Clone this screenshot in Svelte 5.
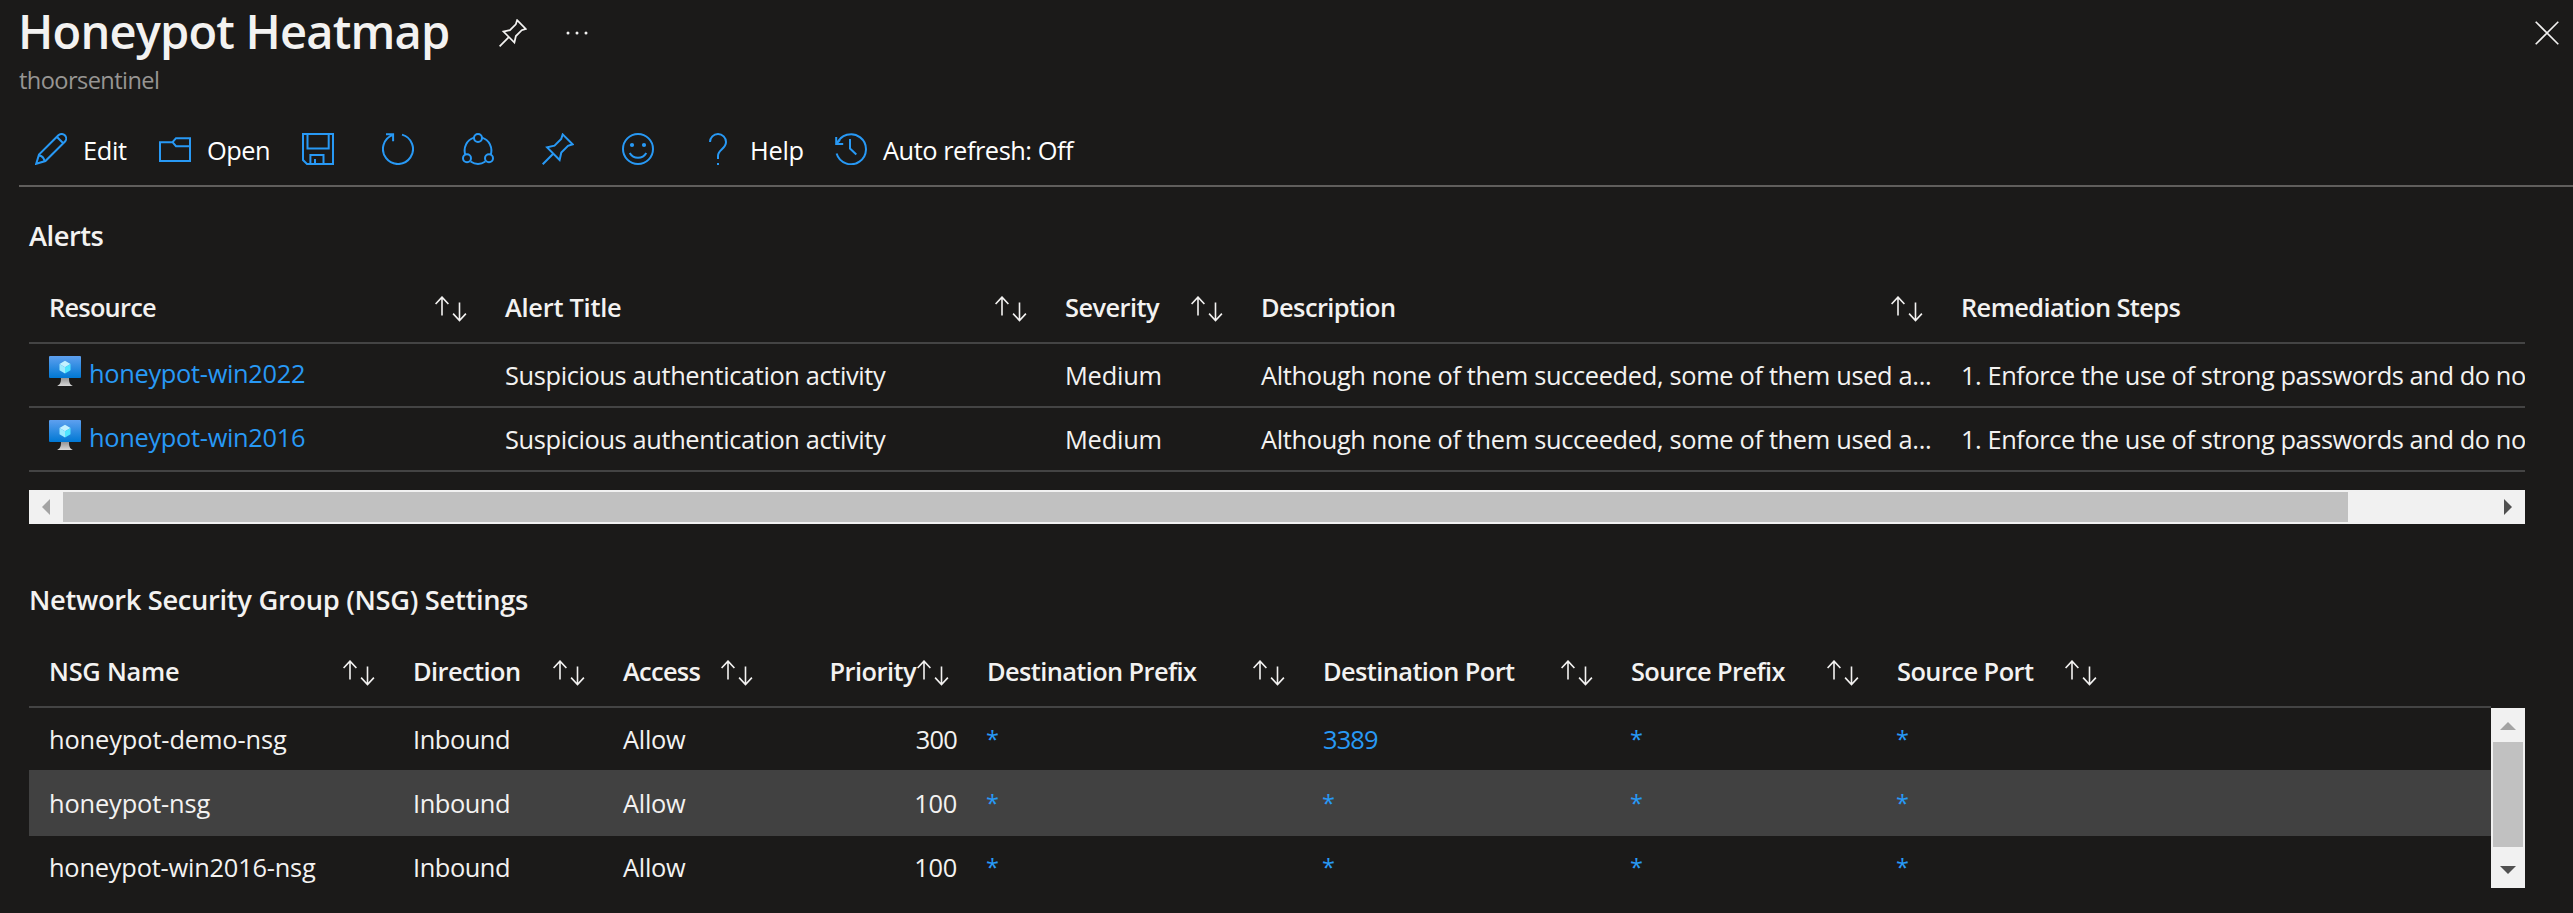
<script>
  const tools = [
    { icon: 'edit', label: 'Edit', w: 42 },
    { icon: 'open', label: 'Open', w: 61 },
    { icon: 'save' },
    { icon: 'refresh' },
    { icon: 'share' },
    { icon: 'pin' },
    { icon: 'smile' },
    { icon: 'help', label: 'Help', w: 51.5 },
    { icon: 'history', label: 'Auto refresh: Off', w: 192.5 }
  ];

  const alertCols = [
    { t: 'Resource', w: 105 },
    { t: 'Alert Title', w: 116 },
    { t: 'Severity', w: 94 },
    { t: 'Description', w: 132 },
    { t: 'Remediation Steps', w: 217.5, plain: true }
  ];
  const alerts = ['honeypot-win2022', 'honeypot-win2016'];

  const nsgCols = [
    { t: 'NSG Name', w: 128 },
    { t: 'Direction', w: 105 },
    { t: 'Access', w: 77.5 },
    { t: 'Priority', w: 85.5, num: true },
    { t: 'Destination Prefix', w: 208 },
    { t: 'Destination Port', w: 190 },
    { t: 'Source Prefix', w: 153.5 },
    { t: 'Source Port', w: 136 }
  ];
  const nsgs = [
    { name: 'honeypot-demo-nsg', w: 236, priority: '300', port: '3389', pw: 54 },
    { name: 'honeypot-nsg', w: 159.5, priority: '100', port: '*', pw: 0, active: true },
    { name: 'honeypot-win2016-nsg', w: 265, priority: '100', port: '*', pw: 0 }
  ];

  const ctx = document.createElement('canvas').getContext('2d');

  // Tracks the text so that its inked width equals the given number of pixels.
  function fit(node, width) {
    const text = node.textContent.trim();
    if (!width || text.length < 2) return;
    const cs = getComputedStyle(node);
    ctx.font = `${cs.fontWeight} ${cs.fontSize} ${cs.fontFamily}`;
    const m = ctx.measureText(text);
    const ink = m.actualBoundingBoxLeft + m.actualBoundingBoxRight;
    node.style.letterSpacing = `${((width - ink) / (text.length - 1)).toFixed(3)}px`;
  }
</script>

{#snippet pinShape()}
  <path d="M20.7 1.4 30.6 11.3 26 12.8 19.3 19.5 17.6 26.9 5.1 14.4 12.5 12.7 19.2 6ZM11.2 20.8.7 31.3" />
{/snippet}

{#snippet sort()}
  <svg class="sort" width="32" height="26" viewBox="0 0 32 26">
    <path d="M7 1V19.5M.6 8 7 1.1 13.4 8M24.5 6.5V24.5M18.1 17.6 24.5 24.5 30.9 17.6" />
  </svg>
{/snippet}

<div class="blade">
  <header>
    <h1><span use:fit={426}>Honeypot Heatmap</span></h1>
    <svg class="head-pin" width="28" height="28" viewBox="0 0 32 32">{@render pinShape()}</svg>
    <svg class="dots" width="22" height="4" viewBox="0 0 22 4">
      <circle cx="2" cy="2" r="1.5" /><circle cx="11" cy="2" r="1.5" /><circle cx="20" cy="2" r="1.5" />
    </svg>
    <svg class="close" width="24" height="24" viewBox="0 0 24 24"><path d="M.7.7 23.3 23.3M23.3.7.7 23.3" /></svg>
  </header>
  <div class="subtitle"><span use:fit={139}>thoorsentinel</span></div>

  <nav class="toolbar">
    {#each tools as tool}
      <div class="tool">
        <svg width="32" height="32" viewBox="0 0 32 32">
          {#if tool.icon === 'edit'}
            <path d="M1.2 30.8 4 21.6 23.4 2.3A4.5 4.5 0 0 1 29.8 8.7L10.4 28ZM22 4 28 10M4 22.5Q8.5 23 9.5 28" />
          {:else if tool.icon === 'open'}
            <path d="M1 9.2H13.5L17 5.2H31V28H1ZM13.5 9.2 17 13.2H31" />
          {:else if tool.icon === 'save'}
            <path d="M1 1H31V31H5L1 27ZM5.5 1V15.5H26.7V1M8.4 31V22H21.5V31M13 26V31" />
          {:else if tool.icon === 'refresh'}
            <path d="M20 1.6A15 15 0 1 1 11 1.9M4 1.2H11.1V8.3" />
          {:else if tool.icon === 'share'}
            <circle cx="16" cy="5" r="4" /><circle cx="5" cy="25.3" r="4" /><circle cx="27" cy="25.3" r="4" />
            <path d="M12 4.6A13.5 13.5 0 0 0 3.3 21.7M20 4.6A13.5 13.5 0 0 1 28.7 21.7M8.6 28.5A13.5 13.5 0 0 0 23.4 28.5" />
          {:else if tool.icon === 'pin'}
            {@render pinShape()}
          {:else if tool.icon === 'smile'}
            <circle cx="16" cy="16" r="15" />
            <circle class="dot" cx="10" cy="12" r="2.1" /><circle class="dot" cx="22" cy="12" r="2.1" />
            <path d="M7.7 20A9.6 9.6 0 0 0 24.3 20" />
          {:else if tool.icon === 'help'}
            <path d="M8 9A8 8 0 0 1 24 9C24 16 16 16.500 16 23V26M16 30V32" />
          {:else}
            <path d="M1.900 11A15 15 0 1 1 1.600 20.500M1.200 4V11.100H8.200M1.500 10.500 5 7M15 6V15.600L21.300 21.500" />
          {/if}
        </svg>
        {#if tool.label}<span class="label" use:fit={tool.w}>{tool.label}</span>{/if}
      </div>
    {/each}
  </nav>

  <main>
    <h2><span use:fit={74.5}>Alerts</span></h2>
    <section class="alerts">
      <div class="row head">
        {#each alertCols as c}
          <div class="cell"><span use:fit={c.w}>{c.t}</span>{#if !c.plain}{@render sort()}{/if}</div>
        {/each}
      </div>
      {#each alerts as name}
        <div class="row">
          <div class="cell resource">
            <svg width="32" height="32" viewBox="0 0 32 32">
              <defs>
                <linearGradient id="screen" x1="0" y1="0" x2="0" y2="1">
                  <stop offset="0" stop-color="#5ea0ef" /><stop offset="1" stop-color="#0078d4" />
                </linearGradient>
                <linearGradient id="stand" x1="0" y1="0" x2="0" y2="1">
                  <stop offset="0" stop-color="#949494" /><stop offset="1" stop-color="#d8d8d8" />
                </linearGradient>
              </defs>
              <rect width="32" height="22" rx="1" fill="url(#screen)" />
              <path d="M10.500 8 16 4.800 21.500 8 16 11.200Z" fill="#c3f1ff" />
              <path d="M10.500 8 16 11.200V17.500L10.500 14.300Z" fill="#9cebff" />
              <path d="M21.500 8 16 11.200V17.500L21.500 14.300Z" fill="#50e6ff" />
              <path d="M12 22H20C20 27 21 28.500 24 30H8C11 28.500 12 27 12 22Z" fill="url(#stand)" />
            </svg>
            <a href="#resource" use:fit={214}>{name}</a>
          </div>
          <div class="cell"><span use:fit={380}>Suspicious authentication activity</span></div>
          <div class="cell"><span use:fit={93.5}>Medium</span></div>
          <div class="cell"><span use:fit={669}>Although none of them succeeded, some of them used a...</span></div>
          <div class="cell"><span use:fit={562}>1. Enforce the use of strong passwords and do no</span></div>
        </div>
      {/each}
    </section>
    <div class="hscroll">
      <svg width="34" height="34" viewBox="0 0 34 34"><path d="M21 9V25L13 17Z" fill="#a3a3a3" /></svg>
      <div class="hthumb"></div>
      <svg width="34" height="34" viewBox="0 0 34 34"><path d="M13 9V25L21 17Z" fill="#505050" /></svg>
    </div>

    <h2 class="second"><span use:fit={497}>Network Security Group (NSG) Settings</span></h2>
    <section class="nsg">
      <div class="row head">
        {#each nsgCols as c}
          <div class="cell" class:num-head={c.num}><span use:fit={c.w}>{c.t}</span>{@render sort()}</div>
        {/each}
      </div>
      <div class="body">
        <div class="rows">
          {#each nsgs as n}
            <div class="row" class:active={n.active}>
              <div class="cell"><span use:fit={n.w}>{n.name}</span></div>
              <div class="cell"><span use:fit={94}>Inbound</span></div>
              <div class="cell"><span use:fit={63}>Allow</span></div>
              <div class="cell num"><span use:fit={40.5}>{n.priority}</span></div>
              <div class="cell"><a class="star" href="#prefix">*</a></div>
              <div class="cell"><a class:star={n.port === '*'} href="#port" use:fit={n.pw}>{n.port}</a></div>
              <div class="cell"><a class="star" href="#source">*</a></div>
              <div class="cell"><a class="star" href="#source-port">*</a></div>
            </div>
          {/each}
        </div>
        <div class="vscroll">
          <svg width="34" height="34" viewBox="0 0 34 34"><path d="M9 22H25L17 14Z" fill="#a3a3a3" /></svg>
          <div class="vthumb"></div>
          <svg width="34" height="34" viewBox="0 0 34 34"><path d="M9 12H25L17 20Z" fill="#505050" /></svg>
        </div>
      </div>
    </section>
  </main>
</div>

<style>
  :global(body) {
    background: #1b1a19;
  }
  .blade {
    box-sizing: border-box;
    width: 2573px;
    height: 913px;
    overflow: hidden;
    background: #1b1a19;
    color: #f3f2f1;
    font-family: 'Open Sans', 'Noto Sans', sans-serif;
    font-size: 25.4px;
    white-space: nowrap;
  }
  svg {
    display: block;
    flex: none;
    fill: none;
    stroke-width: 2;
  }
  header {
    display: flex;
    align-items: center;
    height: 61px;
    padding: 0 14px 0 18px;
  }
  h1 {
    width: 481px;
    margin: 0;
    font-size: 47px;
    font-weight: 650;
    line-height: 62px;
  }
  .head-pin {
    stroke: #f3f2f1;
    margin-top: 5px;
  }
  .dots {
    margin: 5px 0 0 39px;
    fill: #f3f2f1;
  }
  .close {
    margin: 5px 0 0 auto;
    stroke: #f3f2f1;
    stroke-width: 1.6;
  }
  .subtitle {
    height: 32px;
    padding: 3px 0 0 19px;
    font-size: 23.6px;
    line-height: 32px;
    color: #979593;
  }
  .toolbar {
    display: grid;
    grid-template-columns: 124px 143px repeat(5, 80px) 133px auto;
    justify-content: start;
    align-items: center;
    height: 72px;
    margin: 17px 0 0 19px;
    padding-left: 16px;
    border-bottom: 2px solid #605e5c;
  }
  .tool {
    display: flex;
    align-items: center;
    gap: 16px;
  }
  .tool svg {
    stroke: #2899f5;
  }
  .tool .dot {
    fill: #2899f5;
    stroke: none;
  }
  .label {
    color: #fff;
    padding-top: 2px;
  }
  main {
    padding: 29px 48px 0 29px;
  }
  h2 {
    height: 40px;
    margin: 0 0 16px;
    font-size: 27.3px;
    font-weight: 650;
    line-height: 40px;
  }
  h2.second {
    margin-top: 56px;
  }
  .row {
    display: grid;
    height: 62px;
    border-bottom: 2px solid #444;
  }
  .alerts {
    overflow: hidden;
  }
  .alerts .row {
    grid-template-columns: 456px 560px 196px 700px 584px;
  }
  .nsg .row {
    grid-template-columns: 364px 210px 168px 196px 336px 308px 266px 238px;
  }
  .row.head {
    height: 70px;
    font-weight: 650;
  }
  .cell {
    display: flex;
    align-items: center;
    min-width: 0;
    padding-left: 20px;
  }
  .head .cell {
    justify-content: space-between;
    padding-right: 18px;
  }
  .head .num-head {
    justify-content: flex-end;
  }
  .num-head .sort {
    margin-left: 1px;
  }
  .cell.num {
    justify-content: flex-end;
    padding-right: 10px;
  }
  .sort {
    margin-top: 3px;
    stroke: #f3f2f1;
    stroke-width: 1.6;
  }
  .resource {
    gap: 8px;
    padding: 0 0 4px 20px;
  }
  .resource svg {
    margin-top: -2px;
  }
  a {
    color: #2899f5;
    text-decoration: none;
  }
  .star {
    margin-left: -1px;
    font-size: 23.5px;
  }
  .hscroll {
    display: flex;
    align-items: center;
    height: 34px;
    margin-top: 18px;
    background: #f1f1f1;
  }
  .hthumb {
    width: 2285px;
    height: 30px;
    margin-right: auto;
    background: #c1c1c1;
  }
  .nsg .head {
    margin-right: 34px;
  }
  .body {
    display: flex;
    height: 180px;
    overflow: hidden;
  }
  .rows {
    flex: 1;
  }
  .rows .row {
    border-bottom-color: transparent;
  }
  .rows .row:first-child,
  .rows .row.active {
    border-bottom-color: #414141;
  }
  .rows .row.active {
    background: #414141;
  }
  .vscroll {
    display: flex;
    flex-direction: column;
    align-items: center;
    width: 34px;
    background: #f1f1f1;
  }
  .vthumb {
    width: 30px;
    height: 105px;
    margin-bottom: auto;
    background: #c1c1c1;
  }
</style>
